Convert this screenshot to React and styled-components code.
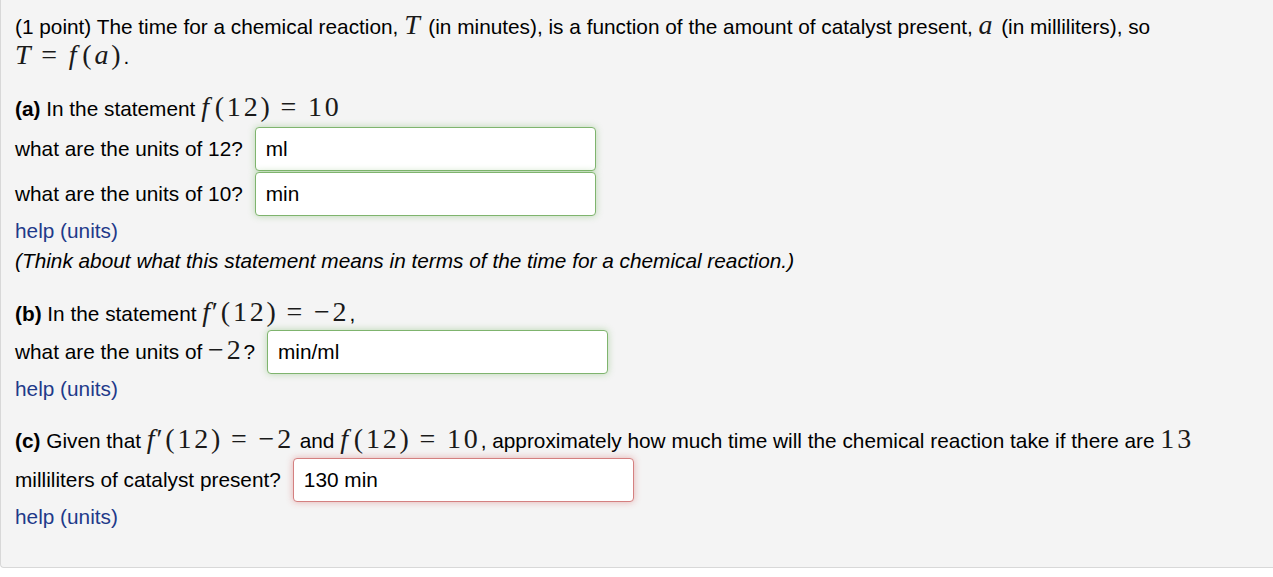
import React from "react";
import styled, { createGlobalStyle, css } from "styled-components";

const GlobalStyle = createGlobalStyle`
  html, body {
    margin: 0;
    padding: 0;
    background: #ffffff;
  }
  body {
    font-family: "Liberation Sans", Arial, sans-serif;
    color: #000;
  }
`;

const Panel = styled.div`
  box-sizing: border-box;
  width: 1300px;
  background: #f4f4f4;
  border-left: 1px solid #d8d8d8;
  border-bottom: 1px solid #d8d8d8;
  border-bottom-left-radius: 4px;
  padding: 12px 0 35px 14px;
  font-size: 20.8px;
  line-height: 30px;
`;

const Para = styled.div`
  margin-top: ${(p) => p.$gap || 0}px;
  white-space: nowrap;
`;

const Math = styled.span`
  font-family: "Liberation Serif", "Times New Roman", serif;
  font-size: 28px;
  line-height: 0;
  letter-spacing: 2.8px;
  color: #1a1a1a;
`;

const Var = styled.span`
  font-style: italic;
  margin-right: ${(p) => p.$corr || 0}px;
`;

const Prime = styled.span`
  font-style: normal;
  margin-left: -1px;
`;

const Op = styled.span`
  margin: 0 0.32em 0 0.28em;
`;

const Bold = styled.b`
  font-weight: bold;
`;

const Row = styled.div`
  display: flex;
  align-items: center;
  margin-top: ${(p) => p.$gap || 0}px;
  white-space: nowrap;
`;

const AnswerInput = styled.input`
  box-sizing: border-box;
  width: 341px;
  height: 44px;
  margin-left: 12px;
  padding: 0 10px;
  font-family: "Liberation Sans", Arial, sans-serif;
  font-size: 20.8px;
  color: #000;
  background: #fff;
  border-radius: 4px;
  outline: none;
  ${(p) =>
    p.$status === "correct"
      ? css`
          border: 1px solid #7fb46e;
          box-shadow: 0 0 7px rgba(110, 180, 90, 0.45);
        `
      : css`
          border: 1px solid #d48080;
          box-shadow: 0 0 7px rgba(215, 90, 90, 0.45);
        `}
`;

const HelpLink = styled.a`
  display: block;
  color: #1f3a8a;
  text-decoration: none;
  cursor: pointer;
`;

const Hint = styled.div`
  font-style: italic;
`;

export default function App() {
  return (
    <>
      <GlobalStyle />
      <Panel>
        <Para>
          (1 point) The time for a chemical reaction, <Math><Var>T</Var></Math> (in minutes), is a
          function of the amount of catalyst present, <Math><Var>a</Var></Math> (in milliliters), so
          <br />
          <Math>
            <Var>T</Var>
            <Op>=</Op>
            <Var $corr={3}>f</Var>(<Var>a</Var>)
          </Math>
          .
        </Para>

        <Para $gap={22}>
          <Bold>(a)</Bold> In the statement{" "}
          <Math>
            <Var $corr={3}>f</Var>(12)<Op>=</Op>10
          </Math>
        </Para>
        <Row $gap={3}>
          what are the units of 12?
          <AnswerInput $status="correct" defaultValue="ml" />
        </Row>
        <Row $gap={1}>
          what are the units of 10?
          <AnswerInput $status="correct" defaultValue="min" />
        </Row>
        <HelpLink>help (units)</HelpLink>
        <Hint>(Think about what this statement means in terms of the time for a chemical reaction.)</Hint>

        <Para $gap={23}>
          <Bold>(b)</Bold> In the statement{" "}
          <Math>
            <Var>f</Var><Prime>′</Prime>(12)<Op>=</Op>−2
          </Math>
          ,
        </Para>
        <Row $gap={1}>
          <span>
            what are the units of <Math>−2</Math>?
          </span>
          <AnswerInput $status="correct" defaultValue="min/ml" />
        </Row>
        <HelpLink>help (units)</HelpLink>

        <Para $gap={22}>
          <Bold>(c)</Bold> Given that{" "}
          <Math>
            <Var>f</Var><Prime>′</Prime>(12)<Op>=</Op>−2
          </Math>{" "}
          and{" "}
          <Math>
            <Var $corr={3}>f</Var>(12)<Op>=</Op>10
          </Math>
          , approximately how much time will the chemical reaction take if there are{" "}
          <Math>13</Math>
        </Para>
        <Row $gap={2}>
          milliliters of catalyst present?
          <AnswerInput $status="incorrect" defaultValue="130 min" />
        </Row>
        <HelpLink>help (units)</HelpLink>
      </Panel>
    </>
  );
}
